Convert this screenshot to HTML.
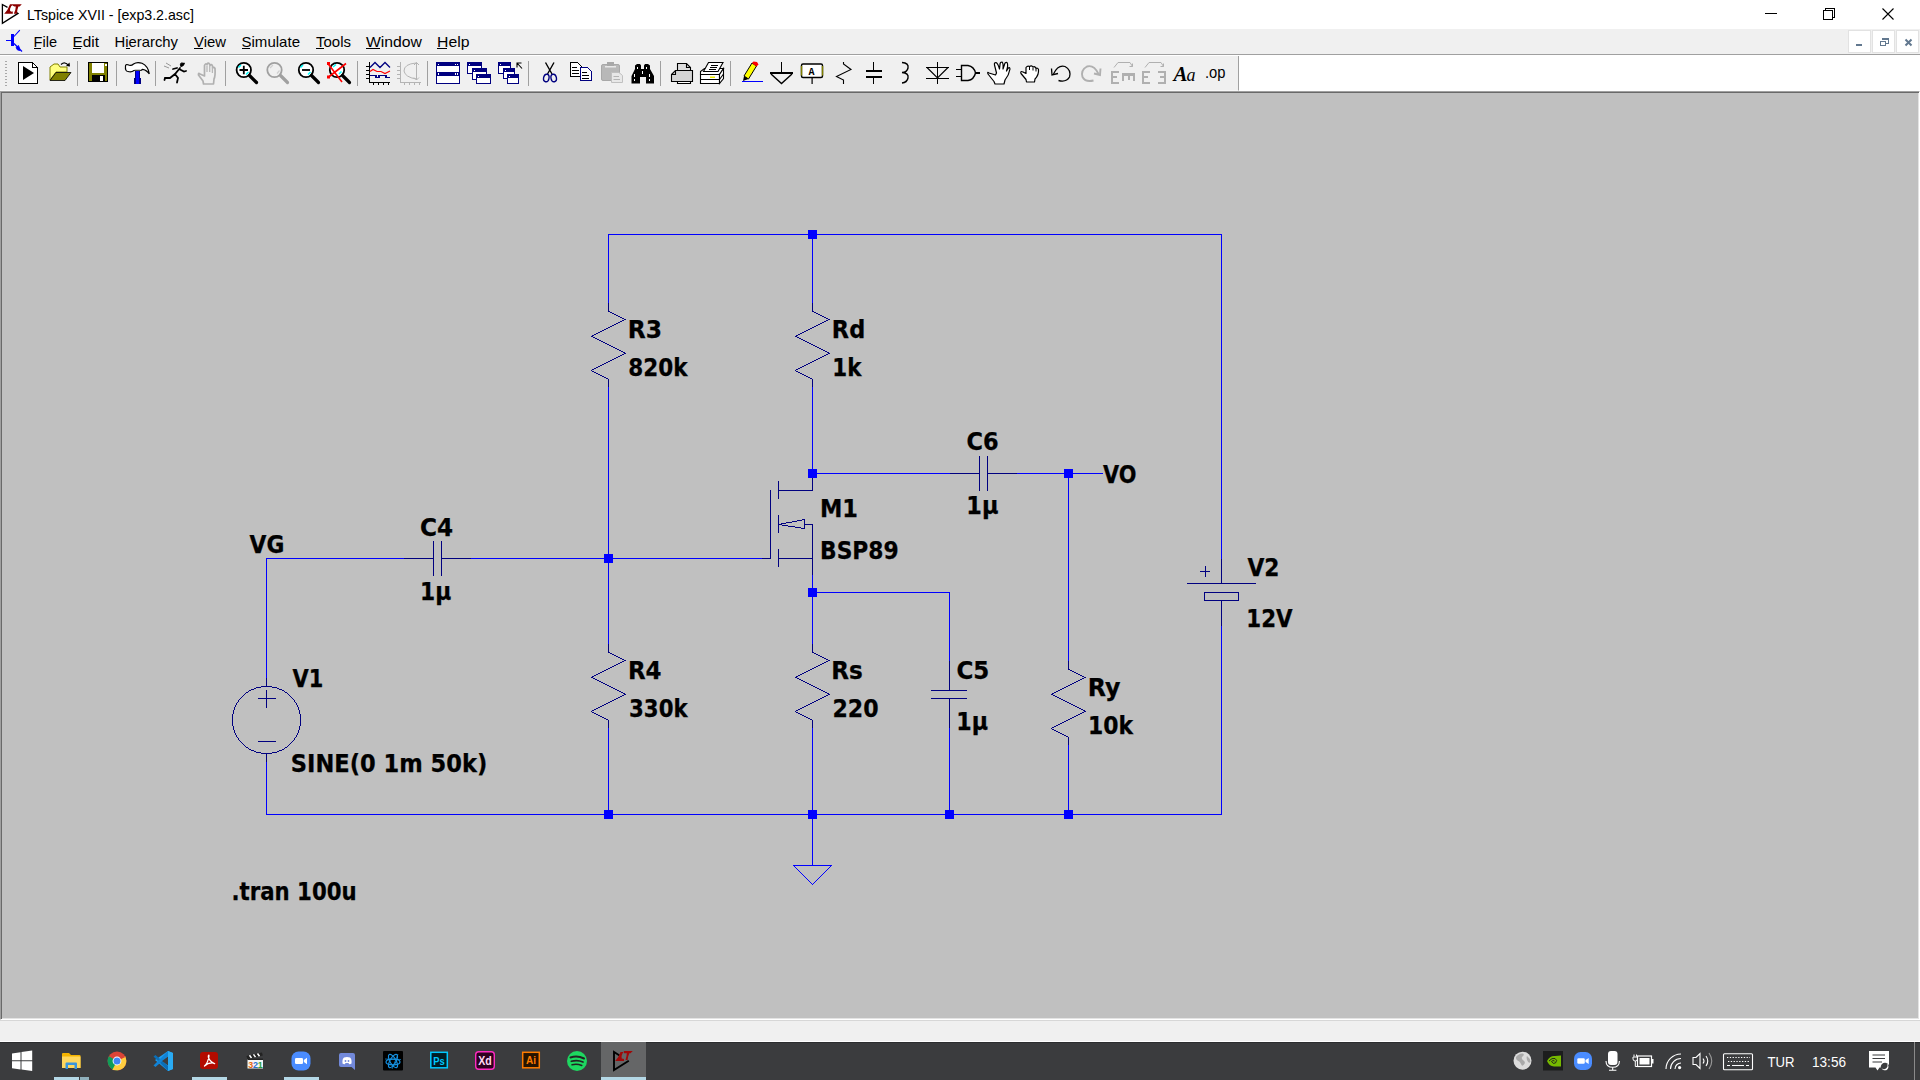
<!DOCTYPE html>
<html><head><meta charset="utf-8"><title>LTspice XVII - [exp3.2.asc]</title>
<style>
html,body{margin:0;padding:0;width:1920px;height:1080px;overflow:hidden;background:#c0c0c0;font-family:"Liberation Sans",sans-serif;}
#title{position:absolute;left:0;top:0;width:1920px;height:29px;background:#fff;}
#menu{position:absolute;left:0;top:29px;width:1920px;height:25px;background:#f0f0f0;border-bottom:1px solid #a0a0a0;}
#tb{position:absolute;left:0;top:55px;width:1920px;height:36px;background:#fff;}
#tbl{position:absolute;left:0;top:1px;width:1238px;height:34px;background:#f0f0f0;border-right:1px solid #a0a0a0;border-bottom:1px solid #f8f8f8}
#cv{position:absolute;left:0;top:91px;width:1918px;height:927px;background:#c0c0c0;border-top:1px solid #a0a0a0;border-left:1px solid #a0a0a0;border-right:1px solid #fff;border-bottom:1px solid #fff;box-shadow:inset 1px 1px 0 #696969, inset -1px -1px 0 #e3e3e3;box-sizing:content-box}
#status{position:absolute;left:0;top:1020px;width:1920px;height:22px;background:#f0f0f0;border-top:1px solid #d7d7d7;border-bottom:1px solid #fff;box-sizing:border-box}
#task{position:absolute;left:0;top:1042px;width:1920px;height:38px;background:#3b3c3e;border-top:1px solid #2c2d2f;box-sizing:border-box}
#sch{position:absolute;left:0;top:0;}
</style></head><body>
<div id="cv"></div>
<svg id="sch" width="1920" height="1080" viewBox="0 0 1920 1080" shape-rendering="crispEdges"><path fill="#0000ff" d="M266 814h956v1h-956zM266 559h1v119h-1zM266 762h1v52h-1zM604 554h9v4h-9zM604 559h9v4h-9zM604 810h9v4h-9zM604 815h9v4h-9zM1068 478h1v183h-1zM1068 745h1v65h-1zM608 235h1v68h-1zM608 387h1v167h-1zM608 563h1v81h-1zM608 728h1v82h-1zM812 239h1v64h-1zM812 387h1v82h-1zM812 575h1v13h-1zM812 597h1v47h-1zM812 728h1v82h-1zM812 819h1v46h-1zM812 884h1v1h-1zM949 593h1v68h-1zM949 728h1v82h-1zM1221 235h1v324h-1zM1221 626h1v188h-1zM808 230h9v4h-9zM808 235h9v4h-9zM808 469h9v4h-9zM808 474h9v4h-9zM808 588h9v4h-9zM808 593h9v4h-9zM808 810h9v4h-9zM808 815h9v4h-9zM945 810h9v4h-9zM945 815h9v4h-9zM1064 469h9v4h-9zM1064 474h9v4h-9zM1064 810h9v4h-9zM1064 815h9v4h-9zM808 473h142v1h-142zM808 592h142v1h-142zM1017 473h86v1h-86zM608 234h614v1h-614zM266 558h138v1h-138zM471 558h291v1h-291zM793 865h39v1h-39zM795 867h1v1h-1zM829 867h1v1h-1zM794 866h1v1h-1zM830 866h1v1h-1zM802 874h1v1h-1zM822 874h1v1h-1zM806 878h1v1h-1zM818 878h1v1h-1zM798 870h1v1h-1zM826 870h1v1h-1zM800 872h1v1h-1zM824 872h1v1h-1zM810 882h1v1h-1zM814 882h1v1h-1zM803 875h1v1h-1zM821 875h1v1h-1zM796 868h1v1h-1zM828 868h1v1h-1zM809 881h1v1h-1zM815 881h1v1h-1zM801 873h1v1h-1zM823 873h1v1h-1zM797 869h1v1h-1zM827 869h1v1h-1zM799 871h1v1h-1zM825 871h1v1h-1zM805 877h1v1h-1zM819 877h1v1h-1zM807 879h1v1h-1zM817 879h1v1h-1zM808 880h1v1h-1zM816 880h1v1h-1zM811 883h1v1h-1zM813 883h1v1h-1zM804 876h1v1h-1zM820 876h1v1h-1z"/>
<path fill="#000080" d="M770 490h1v68h-1zM778 524h4v1h-4zM804 524h9v1h-9zM598 332h2v1h-2zM598 366h2v1h-2zM598 374h2v1h-2zM598 673h2v1h-2zM598 707h2v1h-2zM598 715h2v1h-2zM802 332h2v1h-2zM802 366h2v1h-2zM802 374h2v1h-2zM802 673h2v1h-2zM802 707h2v1h-2zM802 715h2v1h-2zM249 690h2v1h-2zM249 749h2v1h-2zM266 678h1v8h-1zM266 690h1v8h-1zM266 699h1v9h-1zM266 754h1v8h-1zM282 690h2v1h-2zM282 749h2v1h-2zM617 349h2v1h-2zM617 690h2v1h-2zM821 349h2v1h-2zM821 690h2v1h-2zM931 690h36v1h-36zM931 698h36v1h-36zM1058 690h2v1h-2zM1058 724h2v1h-2zM1058 732h2v1h-2zM233 710h1v4h-1zM233 726h1v4h-1zM299 710h1v4h-1zM299 726h1v4h-1zM592 335h2v1h-2zM592 369h2v1h-2zM592 371h2v1h-2zM592 676h2v1h-2zM592 710h2v1h-2zM592 712h2v1h-2zM796 335h2v1h-2zM796 369h2v1h-2zM796 371h2v1h-2zM796 676h2v1h-2zM796 710h2v1h-2zM796 712h2v1h-2zM949 661h1v29h-1zM949 699h1v29h-1zM1083 710h2v1h-2zM404 558h30v1h-30zM441 558h30v1h-30zM762 558h9v1h-9zM778 490h35v1h-35zM778 558h35v1h-35zM238 700h1v2h-1zM238 738h1v2h-1zM294 700h1v2h-1zM294 738h1v2h-1zM612 313h2v1h-2zM612 325h2v1h-2zM612 359h2v1h-2zM612 654h2v1h-2zM612 666h2v1h-2zM612 700h2v1h-2zM816 313h2v1h-2zM816 325h2v1h-2zM816 359h2v1h-2zM816 654h2v1h-2zM816 666h2v1h-2zM816 700h2v1h-2zM1063 700h2v1h-2zM618 316h2v1h-2zM618 322h2v1h-2zM618 356h2v1h-2zM618 657h2v1h-2zM618 663h2v1h-2zM618 697h2v1h-2zM822 316h2v1h-2zM822 322h2v1h-2zM822 356h2v1h-2zM822 657h2v1h-2zM822 663h2v1h-2zM822 697h2v1h-2zM1068 661h1v8h-1zM1068 737h1v8h-1zM433 541h1v17h-1zM433 559h1v17h-1zM441 541h1v17h-1zM441 559h1v17h-1zM778 481h1v9h-1zM778 491h1v8h-1zM778 515h1v9h-1zM778 525h1v8h-1zM778 549h1v9h-1zM778 559h1v8h-1zM812 303h1v8h-1zM812 379h1v8h-1zM812 478h1v12h-1zM812 525h1v33h-1zM812 559h1v16h-1zM812 644h1v8h-1zM812 720h1v8h-1zM1187 583h69v1h-69zM1221 559h1v24h-1zM1221 601h1v25h-1zM594 334h2v1h-2zM594 368h2v1h-2zM594 372h2v1h-2zM594 675h2v1h-2zM594 709h2v1h-2zM594 713h2v1h-2zM798 334h2v1h-2zM798 368h2v1h-2zM798 372h2v1h-2zM798 675h2v1h-2zM798 709h2v1h-2zM798 713h2v1h-2zM603 342h2v1h-2zM603 683h2v1h-2zM807 342h2v1h-2zM807 683h2v1h-2zM1072 671h2v1h-2zM1072 683h2v1h-2zM1072 717h2v1h-2zM239 699h1v1h-1zM239 740h1v1h-1zM293 699h1v1h-1zM293 740h1v1h-1zM614 314h2v1h-2zM614 324h2v1h-2zM614 358h2v1h-2zM614 655h2v1h-2zM614 665h2v1h-2zM614 699h2v1h-2zM818 314h2v1h-2zM818 324h2v1h-2zM818 358h2v1h-2zM818 655h2v1h-2zM818 665h2v1h-2zM818 699h2v1h-2zM1061 699h2v1h-2zM240 698h1v1h-1zM240 741h1v1h-1zM258 698h18v1h-18zM258 741h18v1h-18zM292 698h1v1h-1zM292 741h1v1h-1zM616 315h2v1h-2zM616 323h2v1h-2zM616 357h2v1h-2zM616 656h2v1h-2zM616 664h2v1h-2zM616 698h2v1h-2zM820 315h2v1h-2zM820 323h2v1h-2zM820 357h2v1h-2zM820 656h2v1h-2zM820 664h2v1h-2zM820 698h2v1h-2zM1059 698h2v1h-2zM608 303h1v8h-1zM608 379h1v8h-1zM608 644h1v8h-1zM608 720h1v8h-1zM610 312h2v1h-2zM610 326h2v1h-2zM610 360h2v1h-2zM610 653h2v1h-2zM610 667h2v1h-2zM610 701h2v1h-2zM814 312h2v1h-2zM814 326h2v1h-2zM814 360h2v1h-2zM814 653h2v1h-2zM814 667h2v1h-2zM814 701h2v1h-2zM1065 701h2v1h-2zM1082 676h2v1h-2zM1082 678h2v1h-2zM1082 712h2v1h-2zM1204 592h35v1h-35zM1204 600h35v1h-35zM245 693h1v1h-1zM245 746h1v1h-1zM287 693h1v1h-1zM287 746h1v1h-1zM623 352h2v1h-2zM623 693h2v1h-2zM827 352h2v1h-2zM827 693h2v1h-2zM1052 693h2v1h-2zM1052 727h2v1h-2zM1052 729h2v1h-2zM232 714h1v12h-1zM300 714h1v12h-1zM1062 688h2v1h-2zM1062 722h2v1h-2zM1062 734h2v1h-2zM236 703h1v2h-1zM236 735h1v2h-1zM296 703h1v2h-1zM296 735h1v2h-1zM606 328h2v1h-2zM606 362h2v1h-2zM606 378h2v1h-2zM606 669h2v1h-2zM606 703h2v1h-2zM606 719h2v1h-2zM810 328h2v1h-2zM810 362h2v1h-2zM810 378h2v1h-2zM810 669h2v1h-2zM810 703h2v1h-2zM810 719h2v1h-2zM1069 703h2v1h-2zM242 696h1v1h-1zM242 743h1v1h-1zM290 696h1v1h-1zM290 743h1v1h-1zM620 317h2v1h-2zM620 321h2v1h-2zM620 355h2v1h-2zM620 658h2v1h-2zM620 662h2v1h-2zM620 696h2v1h-2zM824 317h2v1h-2zM824 321h2v1h-2zM824 355h2v1h-2zM824 658h2v1h-2zM824 662h2v1h-2zM824 696h2v1h-2zM1055 696h2v1h-2zM1200 571h10v1h-10zM615 348h2v1h-2zM615 689h2v1h-2zM819 348h2v1h-2zM819 689h2v1h-2zM246 692h2v1h-2zM246 747h2v1h-2zM285 692h2v1h-2zM285 747h2v1h-2zM621 351h2v1h-2zM621 692h2v1h-2zM825 351h2v1h-2zM825 692h2v1h-2zM1054 692h2v1h-2zM1054 726h2v1h-2zM1054 730h2v1h-2zM607 344h2v1h-2zM607 685h2v1h-2zM811 344h2v1h-2zM811 685h2v1h-2zM254 688h2v1h-2zM254 751h2v1h-2zM277 688h2v1h-2zM277 751h2v1h-2zM613 347h2v1h-2zM613 688h2v1h-2zM817 347h2v1h-2zM817 688h2v1h-2zM608 311h2v1h-2zM608 327h2v1h-2zM608 361h2v1h-2zM608 652h2v1h-2zM608 668h2v1h-2zM608 702h2v1h-2zM812 311h2v1h-2zM812 327h2v1h-2zM812 361h2v1h-2zM812 652h2v1h-2zM812 668h2v1h-2zM812 702h2v1h-2zM1080 675h2v1h-2zM1080 679h2v1h-2zM1080 713h2v1h-2zM609 345h2v1h-2zM609 686h2v1h-2zM813 345h2v1h-2zM813 686h2v1h-2zM601 341h2v1h-2zM601 682h2v1h-2zM805 341h2v1h-2zM805 682h2v1h-2zM237 702h1v1h-1zM237 737h1v1h-1zM295 702h1v1h-1zM295 737h1v1h-1zM1067 702h2v1h-2zM243 695h1v1h-1zM243 744h1v1h-1zM289 695h1v1h-1zM289 744h1v1h-1zM622 318h2v1h-2zM622 320h2v1h-2zM622 354h2v1h-2zM622 659h2v1h-2zM622 661h2v1h-2zM622 695h2v1h-2zM826 318h2v1h-2zM826 320h2v1h-2zM826 354h2v1h-2zM826 659h2v1h-2zM826 661h2v1h-2zM826 695h2v1h-2zM1053 695h2v1h-2zM597 339h2v1h-2zM597 680h2v1h-2zM801 339h2v1h-2zM801 680h2v1h-2zM1078 674h2v1h-2zM1078 680h2v1h-2zM1078 714h2v1h-2zM795 527h6v1h-6zM804 520h1v4h-1zM804 525h1v3h-1zM261 686h11v1h-11zM261 753h11v1h-11zM1066 686h2v1h-2zM1066 720h2v1h-2zM1066 736h2v1h-2zM599 340h2v1h-2zM599 681h2v1h-2zM803 340h2v1h-2zM803 681h2v1h-2zM1076 673h2v1h-2zM1076 681h2v1h-2zM1076 715h2v1h-2zM1205 566h1v5h-1zM1205 572h1v5h-1zM1068 669h2v1h-2zM1068 685h2v1h-2zM1068 719h2v1h-2zM591 336h2v1h-2zM591 677h2v1h-2zM795 336h2v1h-2zM795 677h2v1h-2zM1084 677h2v1h-2zM1084 711h2v1h-2zM801 528h4v1h-4zM595 338h2v1h-2zM595 679h2v1h-2zM799 338h2v1h-2zM799 679h2v1h-2zM251 689h3v1h-3zM251 750h3v1h-3zM279 689h3v1h-3zM279 750h3v1h-3zM1060 689h2v1h-2zM1060 723h2v1h-2zM1060 733h2v1h-2zM979 456h1v17h-1zM979 474h1v17h-1zM987 456h1v17h-1zM987 474h1v17h-1zM604 329h2v1h-2zM604 363h2v1h-2zM604 377h2v1h-2zM604 670h2v1h-2zM604 704h2v1h-2zM604 718h2v1h-2zM808 329h2v1h-2zM808 363h2v1h-2zM808 377h2v1h-2zM808 670h2v1h-2zM808 704h2v1h-2zM808 718h2v1h-2zM1064 687h2v1h-2zM1064 721h2v1h-2zM1064 735h2v1h-2zM782 525h6v1h-6zM235 705h1v2h-1zM235 733h1v2h-1zM297 705h1v2h-1zM297 733h1v2h-1zM602 330h2v1h-2zM602 364h2v1h-2zM602 376h2v1h-2zM602 671h2v1h-2zM602 705h2v1h-2zM602 717h2v1h-2zM806 330h2v1h-2zM806 364h2v1h-2zM806 376h2v1h-2zM806 671h2v1h-2zM806 705h2v1h-2zM806 717h2v1h-2zM1073 705h2v1h-2zM600 331h2v1h-2zM600 365h2v1h-2zM600 375h2v1h-2zM600 672h2v1h-2zM600 706h2v1h-2zM600 716h2v1h-2zM804 331h2v1h-2zM804 365h2v1h-2zM804 375h2v1h-2zM804 672h2v1h-2zM804 706h2v1h-2zM804 716h2v1h-2zM792 521h5v1h-5zM234 707h1v3h-1zM234 730h1v3h-1zM298 707h1v3h-1zM298 730h1v3h-1zM1056 691h2v1h-2zM1056 725h2v1h-2zM1056 731h2v1h-2zM596 333h2v1h-2zM596 367h2v1h-2zM596 373h2v1h-2zM596 674h2v1h-2zM596 708h2v1h-2zM596 714h2v1h-2zM800 333h2v1h-2zM800 367h2v1h-2zM800 373h2v1h-2zM800 674h2v1h-2zM800 708h2v1h-2zM800 714h2v1h-2zM624 319h2v1h-2zM624 353h2v1h-2zM624 660h2v1h-2zM624 694h2v1h-2zM828 319h2v1h-2zM828 353h2v1h-2zM828 660h2v1h-2zM828 694h2v1h-2zM1074 672h2v1h-2zM1074 682h2v1h-2zM1074 716h2v1h-2zM1077 707h2v1h-2zM1071 704h2v1h-2zM1204 593h1v7h-1zM1238 593h1v7h-1zM248 691h1v1h-1zM248 748h1v1h-1zM284 691h1v1h-1zM284 748h1v1h-1zM1070 670h2v1h-2zM1070 684h2v1h-2zM1070 718h2v1h-2zM619 350h2v1h-2zM619 691h2v1h-2zM823 350h2v1h-2zM823 691h2v1h-2zM256 687h5v1h-5zM256 752h5v1h-5zM272 687h5v1h-5zM272 752h5v1h-5zM611 346h2v1h-2zM611 687h2v1h-2zM815 346h2v1h-2zM815 687h2v1h-2zM950 473h30v1h-30zM987 473h30v1h-30zM605 343h2v1h-2zM605 684h2v1h-2zM809 343h2v1h-2zM809 684h2v1h-2zM1081 709h2v1h-2zM593 337h2v1h-2zM593 678h2v1h-2zM797 337h2v1h-2zM797 678h2v1h-2zM797 520h5v1h-5zM241 697h1v1h-1zM241 742h1v1h-1zM291 697h1v1h-1zM291 742h1v1h-1zM1057 697h2v1h-2zM788 526h7v1h-7zM591 370h1v1h-1zM591 711h1v1h-1zM795 370h1v1h-1zM795 711h1v1h-1zM1075 706h2v1h-2zM244 694h1v1h-1zM244 745h1v1h-1zM288 694h1v1h-1zM288 745h1v1h-1zM1051 694h2v1h-2zM781 523h5v1h-5zM802 519h3v1h-3zM786 522h6v1h-6zM1079 708h2v1h-2zM1051 728h1v1h-1z"/><g font-family="'DejaVu Sans Condensed','Liberation Sans',sans-serif" font-weight="bold" fill="#000" stroke="#000" stroke-width="0.25" shape-rendering="auto"><text x="627.88" y="337.6" textLength="34.26" lengthAdjust="spacingAndGlyphs" font-size="24.5">R3</text><text x="628.30" y="375.5" textLength="59.30" lengthAdjust="spacingAndGlyphs" font-size="24.5">820k</text><text x="831.86" y="337.5" textLength="33.35" lengthAdjust="spacingAndGlyphs" font-size="24.5">Rd</text><text x="832.36" y="375.5" textLength="29.14" lengthAdjust="spacingAndGlyphs" font-size="24.5">1k</text><text x="966.48" y="449.5" textLength="32.06" lengthAdjust="spacingAndGlyphs" font-size="24.5">C6</text><text x="966.37" y="514.2" textLength="32.06" lengthAdjust="spacingAndGlyphs" font-size="24.5">1µ</text><text x="1103.00" y="482.5" textLength="33.39" lengthAdjust="spacingAndGlyphs" font-size="24.5">VO</text><text x="819.96" y="516.8" textLength="38.00" lengthAdjust="spacingAndGlyphs" font-size="24.5">M1</text><text x="820.02" y="558.7" textLength="78.66" lengthAdjust="spacingAndGlyphs" font-size="24.5">BSP89</text><text x="419.95" y="535.5" textLength="33.10" lengthAdjust="spacingAndGlyphs" font-size="24.5">C4</text><text x="420.02" y="599.5" textLength="31.20" lengthAdjust="spacingAndGlyphs" font-size="24.5">1µ</text><text x="249.50" y="552.5" textLength="34.78" lengthAdjust="spacingAndGlyphs" font-size="24.5">VG</text><text x="1247.50" y="575.8" textLength="32.02" lengthAdjust="spacingAndGlyphs" font-size="24.5">V2</text><text x="1246.36" y="626.7" textLength="46.28" lengthAdjust="spacingAndGlyphs" font-size="24.5">12V</text><text x="292.50" y="687" textLength="30.77" lengthAdjust="spacingAndGlyphs" font-size="24.5">V1</text><text x="290.78" y="771.6" textLength="196.52" lengthAdjust="spacingAndGlyphs" font-size="24.5">SINE(0 1m 50k)</text><text x="627.92" y="679" textLength="33.63" lengthAdjust="spacingAndGlyphs" font-size="24.5">R4</text><text x="629.03" y="716.8" textLength="58.57" lengthAdjust="spacingAndGlyphs" font-size="24.5">330k</text><text x="831.31" y="678.8" textLength="31.52" lengthAdjust="spacingAndGlyphs" font-size="24.5">Rs</text><text x="832.40" y="716.8" textLength="46.14" lengthAdjust="spacingAndGlyphs" font-size="24.5">220</text><text x="956.46" y="678.8" textLength="32.86" lengthAdjust="spacingAndGlyphs" font-size="24.5">C5</text><text x="956.39" y="730" textLength="31.76" lengthAdjust="spacingAndGlyphs" font-size="24.5">1µ</text><text x="1087.85" y="695.8" textLength="32.55" lengthAdjust="spacingAndGlyphs" font-size="24.5">Ry</text><text x="1088.01" y="733.8" textLength="45.05" lengthAdjust="spacingAndGlyphs" font-size="24.5">10k</text><text x="231.47" y="900" textLength="125.17" lengthAdjust="spacingAndGlyphs" font-size="24.5">.tran 100u</text></g></svg>
<div id="title"><svg width="1920" height="29" viewBox="0 0 1920 29" style="position:absolute;left:0;top:0">
<polyline points="7.500,7.400 2.400,4.500 2.400,23.200 18,13.400 16.500,12.500" fill="none" stroke="#000" stroke-width="1.3"/>
<path d="M10,4.200 L13,4.200 Q9.500,8 10.500,11 L12.800,11 L12.800,13.800 L4.200,13.800 Q8,10 10,4.200 Z M12.200,4.200 L21.800,4.200 L19.600,6.600 L18.400,6.600 Q17,10 17,13.800 L13.800,13.800 Q15.800,10 15.800,6.600 L12.800,6.600 Z" fill="#8b0000"/>
<ellipse cx="12.300" cy="8.800" rx="1.900" ry="3" fill="#fff" transform="rotate(20 12.300 8.800)"/>
<text x="27" y="20" font-size="15" textLength="167" lengthAdjust="spacingAndGlyphs" fill="#000">LTspice XVII - [exp3.2.asc]</text>
<g stroke="#000" stroke-width="1" fill="none" shape-rendering="crispEdges">
<line x1="1765" y1="13.500" x2="1777" y2="13.500"/>
<rect x="1823.500" y="10.500" width="9" height="9"/>
<polyline points="1825.500,10.500 1825.500,8.500 1834.500,8.500 1834.500,17.500 1832.500,17.500"/>
</g>
<path d="M1882.500,8.500 L1893.500,19.500 M1893.500,8.500 L1882.500,19.500" stroke="#000" stroke-width="1.1" fill="none"/>
</svg>
</div>
<div id="menu"><svg width="1920" height="25" viewBox="0 29 1920 25" style="position:absolute;left:0;top:0">
<g stroke="#0000ff" fill="none">
<rect x="11" y="34" width="3" height="12" fill="#0000ff" stroke="none" shape-rendering="crispEdges"/>
<rect x="6" y="40" width="5" height="1" fill="#0000ff" stroke="none" shape-rendering="crispEdges"/>
<path d="M14,36.500 L19.800,30.200" stroke-width="1.1"/>
<path d="M14,43.500 L22,51.500" stroke-width="1.2"/>
<path d="M16,47.500 L18.500,45.500 L19.500,48 L20,50.500 L17.500,50 Z" fill="#0000ff" stroke-width="0.8"/>
</g>
<g font-size="15" fill="#000">
<text x="33.500" y="46.800" textLength="23.500" lengthAdjust="spacingAndGlyphs">File</text>
<text x="72.500" y="46.800" textLength="26.500" lengthAdjust="spacingAndGlyphs">Edit</text>
<text x="114.500" y="46.800" textLength="63.500" lengthAdjust="spacingAndGlyphs">Hierarchy</text>
<text x="194" y="46.800" textLength="32" lengthAdjust="spacingAndGlyphs">View</text>
<text x="241.500" y="46.800" textLength="58.500" lengthAdjust="spacingAndGlyphs">Simulate</text>
<text x="316" y="46.800" textLength="35" lengthAdjust="spacingAndGlyphs">Tools</text>
<text x="366" y="46.800" textLength="56" lengthAdjust="spacingAndGlyphs">Window</text>
<text x="437" y="46.800" textLength="32.500" lengthAdjust="spacingAndGlyphs">Help</text>
</g>
<g fill="#000" shape-rendering="crispEdges">
<rect x="34" y="48" width="7" height="1"/><rect x="73" y="48" width="8" height="1"/><rect x="126" y="48" width="4" height="1"/>
<rect x="194" y="48" width="9" height="1"/><rect x="242" y="48" width="8" height="1"/><rect x="316" y="48" width="8" height="1"/>
<rect x="366" y="48" width="14" height="1"/><rect x="437" y="48" width="10" height="1"/>
</g>
<g fill="#fff" stroke="#e2e2e2" stroke-width="1" shape-rendering="crispEdges">
<rect x="1848.500" y="30.500" width="22" height="22"/><rect x="1872.500" y="30.500" width="22" height="22"/><rect x="1896.500" y="30.500" width="22" height="22"/>
</g>
<rect x="1856" y="44" width="6" height="2" fill="#62788f"/>
<g fill="none" stroke="#62788f" shape-rendering="crispEdges">
<rect x="1880.500" y="41.500" width="5" height="4"/><line x1="1880" y1="41" x2="1886" y2="41"/>
<polyline points="1882.500,40 1882.500,38.500 1888.500,38.500 1888.500,43.500 1886,43.500"/><line x1="1882" y1="39" x2="1889" y2="39"/>
</g>
<path d="M1905.500,39.500 L1911.500,45.500 M1911.500,39.500 L1905.500,45.500" stroke="#62788f" stroke-width="2" fill="none"/>
</svg>
</div>
<div id="tb"><div id="tbl"></div><svg width="1920" height="37" viewBox="0 55 1920 37" style="position:absolute;left:0;top:0">
<!-- grip -->
<g fill="#a8a8a8" shape-rendering="crispEdges">
<rect x="5" y="61" width="2" height="1"/><rect x="5" y="64" width="2" height="1"/><rect x="5" y="67" width="2" height="1"/><rect x="5" y="70" width="2" height="1"/><rect x="5" y="73" width="2" height="1"/><rect x="5" y="76" width="2" height="1"/><rect x="5" y="79" width="2" height="1"/><rect x="5" y="82" width="2" height="1"/><rect x="5" y="85" width="2" height="1"/>
</g>
<!-- separators -->
<g fill="#a0a0a0" shape-rendering="crispEdges">
<rect x="77" y="61" width="1" height="25"/><rect x="116" y="61" width="1" height="25"/><rect x="155" y="61" width="1" height="25"/><rect x="225" y="61" width="1" height="25"/>
<rect x="357" y="61" width="1" height="25"/><rect x="427" y="61" width="1" height="25"/><rect x="528" y="61" width="1" height="25"/><rect x="660" y="61" width="1" height="25"/><rect x="730" y="61" width="1" height="25"/>
</g>
<!-- 1 run -->
<g shape-rendering="crispEdges">
<polygon points="18.500,62.500 32.500,62.500 37.500,67.500 37.500,83.500 18.500,83.500" fill="#fff" stroke="#000"/>
<polyline points="32.500,62.500 32.500,67.500 37.500,67.500" fill="none" stroke="#000"/>
</g>
<polygon points="23,66 23,80 34,73" fill="#000"/>
<!-- 2 open -->
<g stroke-linejoin="round">
<polygon points="50,80 50,67 54,64 58,64 60,67 67,67 67,72 56,72" fill="#ffff80" stroke="#808000" stroke-width="1"/>
<polygon points="50,80.500 56,72.500 71,72.500 65,80.500" fill="#808000" stroke="#000" stroke-width="0.8"/>
<path d="M61,64.500 Q65,61 68.500,65.500" fill="none" stroke="#000" stroke-width="1.2"/>
<polygon points="66,66 70,66.500 69.500,62.500" fill="#000"/>
</g>
<!-- 3 save -->
<g shape-rendering="crispEdges">
<rect x="88.500" y="62.500" width="19" height="19" fill="#808000" stroke="#000"/>
<rect x="92" y="63" width="12" height="10" fill="#fff"/>
<rect x="92" y="75" width="13" height="6" fill="#000"/>
<rect x="100" y="76" width="3" height="5" fill="#fff"/>
<rect x="105" y="64" width="2" height="2" fill="#fff"/>
</g>
<!-- 4 hammer -->
<path d="M125.500,66 Q125.500,64 128,64.800 Q131,66.500 133.500,64 Q137,61.500 142,63.300 Q148,66 149.300,73.800 Q146,69.500 142.500,69.300 L141,70.500 L134,70.500 Q131.500,72.500 128,71.500 Q125,71.500 125.500,66 Z" fill="#fff" stroke="#000" stroke-width="1.200"/>
<path d="M134.500,70 L140.500,70" stroke="#909090" stroke-width="1"/>
<g shape-rendering="crispEdges"><rect x="135" y="71" width="5" height="8" fill="#000080"/><rect x="136" y="71" width="3" height="8" fill="#0000ff"/>
<rect x="134" y="78" width="7" height="6" fill="#000080"/><rect x="136" y="78" width="3" height="6" fill="#0000ff"/></g>
<!-- 5 runner -->
<g stroke="#000" fill="none" stroke-width="1.8" stroke-linecap="round">
<path d="M184,63.500 L181,66 M180,68 L175,74 L170,78 L165,78 L164.500,80 M175,74 L178,78 L177,82.500 M173,69 L177,68 M180,69.500 L184,71.500 L186,71"/>
<circle cx="182" cy="64.500" r="1.600" fill="#000" stroke-width="1"/>
</g>
<path d="M164,66 L169,68 M166,63 L171,66" stroke="#808080" stroke-width="0.8"/>
<!-- 6 hand disabled -->
<path d="M200,74 Q198,72.500 198.500,75 L203,81 L203.500,84 L213.500,84 L214,79 Q215.500,76 215,68.500 Q214,66.500 212.700,68 L212.500,66 Q211.500,63.500 210,65.500 L209.500,64 Q208,62 207,64.500 Q205.500,63 204.500,65.500 L204.500,76 Z" fill="none" stroke="#b0b0b0" stroke-width="1.700" stroke-linejoin="round"/>
<path d="M207,65.500 L207,72 M209.700,65.500 L209.700,72 M212.400,67.500 L212.400,73" stroke="#b8b8b8" stroke-width="1.300"/>
<!-- zoom icons -->
<g id="zin">
<circle cx="243.800" cy="70" r="7.200" fill="#fff" stroke="#000" stroke-width="1.800"/>
<path d="M238.500,67.500 L241,65 M246,74.500 L248.500,72" stroke="#00ffff" stroke-width="1.500"/>
<path d="M249.500,75.500 L256.500,82.500" stroke="#000" stroke-width="3.200" stroke-linecap="round"/>
<path d="M239.500,70 L248,70 M243.800,65.800 L243.800,74.200" stroke="#000" stroke-width="1.800"/>
</g>
<g>
<circle cx="274.500" cy="70" r="7.200" fill="#f0f0f0" stroke="#a0a0a0" stroke-width="1.800"/>
<path d="M280.500,75.500 L287.500,82.500" stroke="#a0a0a0" stroke-width="3.200" stroke-linecap="round"/>
<path d="M270,68 L273,65 M277,73.500 L279.500,70.500" stroke="#d0d0d0" stroke-width="1.200"/>
</g>
<g>
<circle cx="306" cy="70" r="7.200" fill="#fff" stroke="#000" stroke-width="1.800"/>
<path d="M300.500,67.500 L303,65 M308,74.500 L310.500,72" stroke="#00ffff" stroke-width="1.500"/>
<path d="M311.500,75.500 L318.500,82.500" stroke="#000" stroke-width="3.200" stroke-linecap="round"/>
<path d="M302,70 L310,70" stroke="#000" stroke-width="1.800"/>
</g>
<g>
<circle cx="337" cy="70" r="7.200" fill="#fff" stroke="#000" stroke-width="1.800"/>
<path d="M333,67 L336,64.500 M339,74 L341.500,71.500" stroke="#00ffff" stroke-width="1.500"/>
<path d="M342.500,75.500 L349.500,82.500" stroke="#000" stroke-width="3.200" stroke-linecap="round"/>
<path d="M327.500,63 L342,82 M346,63.500 L328,77.500" stroke="#ff0000" stroke-width="1.600"/>
<rect x="327" y="62" width="3" height="3" fill="#ff0000"/><rect x="327" y="75.500" width="3" height="3" fill="#ff0000"/>
</g>
<!-- waveform icon -->
<g shape-rendering="crispEdges" fill="none">
<path d="M369.500,62 L369.500,82.500 L390,82.500" stroke="#000"/>
<path d="M366,66.500 L369,66.500 M366,70.500 L369,70.500 M366,74.500 L369,74.500 M366,78.500 L369,78.500 M373.500,83 L373.500,85 M378.500,83 L378.500,85 M383.500,83 L383.500,85 M388.500,83 L388.500,85" stroke="#000"/>
</g>
<polyline points="370,67.500 375,62.500 380,67.500 385,62.500 390,67.500" fill="none" stroke="#000080" stroke-width="1.300"/>
<polyline points="370,71.500 373,69.500 377,71.500 381,71.500 385,73.500 390,71" fill="none" stroke="#ff0000" stroke-width="1.200"/>
<polyline points="370,75.500 376,75.500 376,77.500 379,77.500 379,75.500 386,75.500 386,77.500 390,77.500" fill="none" stroke="#000080" stroke-width="1.200" shape-rendering="crispEdges"/>
<!-- disabled plot -->
<g fill="none" stroke="#b4b4b4" stroke-width="1">
<path d="M400.500,62 L400.500,82.500 L421,82.500" shape-rendering="crispEdges"/>
<path d="M397,66.500 L400,66.500 M397,70.500 L400,70.500 M397,74.500 L400,74.500 M397,78.500 L400,78.500 M404.500,83 L404.500,85 M409.500,83 L409.500,85 M414.500,83 L414.500,85 M419.500,83 L419.500,85" shape-rendering="crispEdges"/>
<path d="M416,63 Q404,64 404,71 Q405,77 416,79 M416.500,62.500 L416.500,80 M414,65 L416.500,62.500 L419,65 M414,77.500 L416.500,80 L419,77.500"/>
</g>
<!-- tile -->
<g shape-rendering="crispEdges">
<rect x="436.500" y="62.500" width="23" height="21" fill="#fff" stroke="#000080"/>
<rect x="437" y="63" width="22" height="3" fill="#000080"/><rect x="437" y="72" width="22" height="4" fill="#000080"/>
<rect x="438" y="64" width="1" height="1" fill="#fff"/><rect x="455" y="64" width="1" height="1" fill="#fff"/><rect x="457" y="64" width="1" height="1" fill="#fff"/>
<rect x="438" y="73" width="1" height="2" fill="#fff"/><rect x="455" y="73" width="1" height="2" fill="#fff"/><rect x="457" y="73" width="1" height="2" fill="#fff"/>
</g>
<!-- cascade -->
<g shape-rendering="crispEdges">
<rect x="467.500" y="62.500" width="14" height="11" fill="#fff" stroke="#000080"/><rect x="468" y="63" width="13" height="3" fill="#000080"/>
<rect x="472.500" y="68.500" width="14" height="11" fill="#fff" stroke="#000080"/><rect x="473" y="69" width="13" height="3" fill="#000080"/>
<rect x="476.500" y="74.500" width="14" height="9" fill="#fff" stroke="#000080"/><rect x="477" y="75" width="13" height="3" fill="#000080"/>
<rect x="469" y="64" width="1" height="1" fill="#fff"/><rect x="474" y="70" width="1" height="1" fill="#fff"/><rect x="478" y="76" width="1" height="1" fill="#fff"/>
</g>
<g shape-rendering="crispEdges">
<rect x="498.500" y="62.500" width="12" height="11" fill="#fff" stroke="#000080"/><rect x="499" y="63" width="11" height="3" fill="#000080"/>
<rect x="503.500" y="68.500" width="11" height="10" fill="#fff" stroke="#000080"/><rect x="504" y="69" width="10" height="3" fill="#000080"/>
<rect x="507.500" y="74.500" width="11" height="9" fill="#fff" stroke="#000080"/><rect x="508" y="75" width="10" height="3" fill="#000080"/>
<rect x="500" y="64" width="1" height="1" fill="#fff"/><rect x="505" y="70" width="1" height="1" fill="#fff"/><rect x="509" y="76" width="1" height="1" fill="#fff"/>
</g>
<path d="M516.500,63 L521.500,63 M517,62.500 L517,67.500 M517,63 L522,68.500" stroke="#000" stroke-width="1.100" fill="none"/>
<!-- scissors -->
<path d="M545.500,62.500 L552,74 M554,62.500 L547.500,74" stroke="#000" stroke-width="1.400" fill="none"/>
<ellipse cx="546.300" cy="78" rx="2.700" ry="3.800" fill="none" stroke="#000080" stroke-width="1.400" transform="rotate(12 546.300 78)"/>
<ellipse cx="553.700" cy="78" rx="2.700" ry="3.800" fill="none" stroke="#000080" stroke-width="1.400" transform="rotate(-12 553.700 78)"/>
<!-- copy -->
<g shape-rendering="crispEdges">
<polygon points="570.500,62.500 577.500,62.500 581.500,66.500 581.500,76.500 570.500,76.500" fill="#fff" stroke="#000"/>
<path d="M572,67.500 L577,67.500 M572,70.500 L579,70.500 M572,73.500 L579,73.500" stroke="#000"/>
<polygon points="580.500,67.500 587.500,67.500 591.500,71.500 591.500,80.500 580.500,80.500" fill="#fff" stroke="#000080"/>
<path d="M582,72.500 L587,72.500 M582,75.500 L589,75.500 M582,78.500 L589,78.500" stroke="#000"/>
</g>
<!-- paste disabled -->
<rect x="601.500" y="64.500" width="18" height="16" rx="1.500" fill="#b8b8b8" stroke="#a8a8a8"/>
<rect x="607" y="62" width="7" height="4" fill="#a8a8a8"/><rect x="605" y="66" width="11" height="1.500" fill="#e8e8e8"/>
<polygon points="611.500,72.500 619,72.500 622.500,75.500 622.500,82.500 611.500,82.500" fill="#e8e8e8" stroke="#c0c0c0"/>
<path d="M613.500,76.500 L619,76.500 M613.500,79.500 L620,79.500" stroke="#b4b4b4"/>
<!-- binoculars -->
<path d="M631.500,83.500 L631.500,76 L635,69 L635,65.500 L637,64 L640,64 L641,65.500 L641,69 L644,69 L644,65.500 L645,64 L648,64 L650,65.500 L650,69 L654,76 L654,83.500 L646,83.500 L646,77 L640,77 L640,83.500 Z" fill="#000"/>
<g fill="#fff" shape-rendering="crispEdges"><rect x="634" y="74" width="1" height="3"/><rect x="634" y="79" width="1" height="2"/><rect x="649" y="74" width="1" height="3"/><rect x="649" y="79" width="1" height="2"/><rect x="637" y="67" width="1" height="2"/><rect x="646" y="67" width="1" height="2"/><rect x="642" y="71" width="1" height="3"/></g>
<!-- printers -->
<g stroke="#000" stroke-width="1.100" stroke-linejoin="miter">
<polygon points="677.500,70.500 677.500,63.500 686.500,63.500 690.500,67.500 690.500,70.500" fill="#dedede"/>
<polyline points="686.500,63.500 686.500,67.500 690.500,67.500" fill="none"/>
<polygon points="671.500,74.500 675.500,70.500 692.500,70.500 692.500,81.500 671.500,81.500" fill="#d4d4d4"/>
<polyline points="671.500,74.500 675.500,74.500 675.500,70.500" fill="none"/>
<polygon points="677.500,81.500 677.500,83.500 690.500,83.500 690.500,81.500" fill="#fff"/>
</g>
<g stroke="#000" stroke-width="1.100" stroke-linejoin="miter">
<polygon points="700.500,74.500 700.500,71.500 704.500,68.500 723.500,68.500 719.500,74.500" fill="#fff"/>
<polygon points="700.500,74.500 719.500,74.500 719.500,83.500 700.500,83.500" fill="#fff"/>
<polygon points="719.500,74.500 723.500,68.500 723.500,78.500 719.500,83.500" fill="#fff"/>
<path d="M700.500,79.500 L719.500,79.500 L723.500,74" fill="none"/>
<polygon points="703.500,71.500 708.500,62.500 723,62.500 718,71.500" fill="#fff"/>
<path d="M711,65.500 L718,65.500 M710,67.500 L717,67.500 M709,69.500 L716,69.500" fill="none"/>
</g>
<rect x="710" y="76.500" width="5" height="1.500" fill="#f0f000"/>
<!-- pencil -->
<polygon points="744,76 752,63 756.500,66 748.500,79" fill="#ffff00" stroke="#000" stroke-width="1"/>
<polygon points="752,63 753.500,61.500 757,62 758.500,64.500 756.500,66.500" fill="#ff0000"/>
<polygon points="744,76 748.500,79 743,81" fill="#000"/>
<rect x="742" y="81" width="21" height="1" fill="#0000ff" shape-rendering="crispEdges"/>
<!-- ground -->
<g shape-rendering="crispEdges"><rect x="781" y="62" width="1" height="11" fill="#000"/><rect x="770" y="72" width="23" height="2" fill="#000"/></g>
<polyline points="771,74 781.500,83.500 792,74" fill="none" stroke="#000" stroke-width="1.400"/>
<!-- label -->
<rect x="801.500" y="64" width="21" height="13.500" rx="1.500" fill="#fff" stroke="#000" stroke-width="1.400"/>
<path d="M801.500,66 L801.500,75.500 M822.500,66 L822.500,75.500" stroke="#808000" stroke-width="1.400"/>
<text x="808.500" y="75" font-size="10" font-weight="bold" fill="#000" font-family="'Liberation Mono',monospace">A</text>
<rect x="811.500" y="78" width="1.200" height="6" fill="#000"/>
<!-- resistor -->
<polyline points="843.500,62 843.500,64 851,69.500 836.500,76.500 843.500,80 843.500,84" fill="none" stroke="#000" stroke-width="1.100"/>
<!-- cap -->
<g shape-rendering="crispEdges" fill="#000"><rect x="873" y="62" width="1" height="9"/><rect x="866" y="70" width="16" height="2"/><rect x="866" y="76" width="16" height="2"/><rect x="873" y="78" width="1" height="6"/></g>
<!-- inductor -->
<path d="M902,62.500 Q909,63 908,68 Q907,72.500 902,72.500 Q909,73 908,78 Q907,82.500 902,83" fill="none" stroke="#000" stroke-width="1.400"/>
<!-- diode -->
<g shape-rendering="crispEdges" fill="#000"><rect x="937" y="62" width="1" height="22"/><rect x="926" y="67" width="23" height="1"/><rect x="926" y="78" width="23" height="1"/></g>
<path d="M927,67.500 L937.500,78 L948,67.500" fill="none" stroke="#000" stroke-width="1.100"/>
<!-- gate -->
<path d="M961.500,65.500 L968,65.500 Q974,66.500 975.500,73 Q974,79.500 968,80.500 L961.500,80.500 Z" fill="#f0f0f0" stroke="#000" stroke-width="1.400"/>
<path d="M956,69.500 L961,69.500 M956,76.500 L961,76.500" stroke="#000" stroke-width="1"/><path d="M975.500,73 L980,73" stroke="#000" stroke-width="2"/>
<!-- move hand -->
<path d="M989,73 Q987,71.500 988,74 L994,81.500 L995,84 L1004,84 L1005,80 Q1009,75 1010,69 Q1009.500,66.500 1008,68.500 L1006.500,71 Q1008.500,65 1007,62.500 Q1005,62 1004.500,64.500 L1003,69 Q1003.500,63 1002,62 Q1000,62 1000,64.500 L999.500,69 Q998,63.500 996,62.500 Q994,62.500 994.500,65 L996.500,73 L995.500,75 Z" fill="#fff" stroke="#000" stroke-width="1.200" stroke-linejoin="round"/>
<!-- drag hand -->
<path d="M1023,72 Q1020,70.500 1021,73.500 L1026,79.500 L1026.500,82 L1034.500,82 L1035,79 Q1039,75 1038.500,69.500 Q1037.500,67.500 1036,68.500 Q1035,66 1033,67 Q1031.500,65 1029.500,66.500 Q1027.500,65.500 1026,67.500 L1026,73.500 Z" fill="#fff" stroke="#000" stroke-width="1.200" stroke-linejoin="round"/>
<path d="M1029.500,67 L1029.500,70 M1033,67.500 L1033,70.500 M1036,69 L1036,71.500" stroke="#000" stroke-width="1"/>
<!-- undo -->
<path d="M1053.500,74 Q1058,64.500 1065,66.500 Q1071.500,70 1069.500,77 Q1066.500,82.500 1058.500,80.500" fill="none" stroke="#000" stroke-width="1.300"/>
<path d="M1051.500,68.500 L1052,75 L1058,73.500" fill="none" stroke="#000" stroke-width="1.300"/>
<!-- redo disabled -->
<path d="M1098.500,74 Q1094,64.500 1087,66.500 Q1080.500,70 1082.500,77 Q1085.500,82.500 1093.500,80.500" fill="none" stroke="#b0b0b0" stroke-width="1.900"/>
<path d="M1100.500,68.500 L1100,75 L1094,73.500" fill="none" stroke="#b0b0b0" stroke-width="1.900"/>
<!-- rotate / mirror -->
<g fill="#b0b0b0" shape-rendering="crispEdges">
<rect x="1111" y="71" width="2" height="13"/><rect x="1111" y="71" width="8" height="2"/><rect x="1111" y="76" width="6" height="2"/><rect x="1111" y="82" width="8" height="2"/>
<rect x="1122" y="73" width="13" height="3"/><rect x="1122" y="73" width="2" height="8"/><rect x="1128" y="73" width="2" height="7"/><rect x="1133" y="73" width="2" height="8"/>
<rect x="1142" y="71" width="2" height="13"/><rect x="1142" y="71" width="8" height="2"/><rect x="1142" y="76" width="6" height="2"/><rect x="1142" y="82" width="8" height="2"/>
<rect x="1164" y="71" width="2" height="13"/><rect x="1158" y="71" width="8" height="2"/><rect x="1160" y="76" width="6" height="2"/><rect x="1158" y="82" width="8" height="2"/>
</g>
<path d="M1114,67.500 L1118,62.500 L1130,62.500 L1132.500,66.500 M1129.500,66.500 L1132.500,66.500 L1132.500,63.500" fill="none" stroke="#b0b0b0" stroke-width="1"/>
<path d="M1145,67.500 L1149,62.500 L1161,62.500 L1163.500,66.500 M1160.500,66.500 L1163.500,66.500 L1163.500,63.500" fill="none" stroke="#b0b0b0" stroke-width="1"/>
<!-- Aa -->
<text x="1173.500" y="81" font-family="'Liberation Serif',serif" font-style="italic" font-weight="bold" font-size="21" fill="#000">A<tspan font-size="18" font-weight="normal" dx="-1">a</tspan></text>
<!-- .op -->
<text x="1205" y="77.500" font-size="16" fill="#000" textLength="20.500" lengthAdjust="spacingAndGlyphs">.op</text>
</svg>
</div>
<div id="status"></div>
<div id="task"><svg width="1920" height="38" viewBox="0 1042 1920 38" style="position:absolute;left:0;top:-1px">
<!-- active app bg -->
<rect x="601" y="1042" width="45" height="35" fill="#656667"/>
<!-- underlines -->
<g shape-rendering="crispEdges">
<rect x="54" y="1077" width="25" height="3" fill="#b4d8e6"/><rect x="79" y="1077" width="1" height="3" fill="#3b3c3e"/><rect x="80" y="1077" width="9" height="3" fill="#8fb0bc"/>
<rect x="192" y="1077" width="35" height="3" fill="#b4d8e6"/>
<rect x="284" y="1077" width="35" height="3" fill="#b4d8e6"/>
<rect x="601" y="1077" width="45" height="3" fill="#b4d8e6"/>
</g>
<!-- windows logo -->
<g fill="#fff">
<polygon points="12,1053.500 20.500,1052.200 20.500,1060.300 12,1060.300"/>
<polygon points="21.500,1052 32.200,1050.500 32.200,1060.300 21.500,1060.300"/>
<polygon points="12,1061.300 20.500,1061.300 20.500,1069.400 12,1068.200"/>
<polygon points="21.500,1061.300 32.200,1061.300 32.200,1071 21.500,1069.500"/>
</g>
<!-- explorer -->
<path d="M62,1054 Q62,1053 63,1053 L69,1053 L71,1055 L79.500,1055 Q80.500,1055 80.500,1056 L80.500,1068 L62,1068 Z" fill="#f5b400"/>
<rect x="62" y="1056.500" width="18.500" height="11.500" fill="#ffd75e"/>
<path d="M65.500,1069 L65.500,1063.500 Q65.500,1062.500 66.500,1062.500 L76,1062.500 Q77,1062.500 77,1063.500 L77,1069 L74.500,1069 L74.500,1065 L68,1065 L68,1069 Z" fill="#3a96dd"/>
<!-- chrome -->
<circle cx="117" cy="1061" r="9.400" fill="#db4437"/>
<path d="M117,1061 L108.900,1056.300 A9.400,9.400 0 0 0 117.900,1070.360 Z" fill="#0f9d58"/>
<path d="M117,1061 L125.100,1056.300 A9.400,9.400 0 0 1 117.900,1070.360 L112.300,1070 Z" fill="#ffcd40"/>
<path d="M117,1061 L126.400,1056.500 L117,1056.500 Z" fill="#db4437"/>
<circle cx="117" cy="1061" r="4.400" fill="#fff"/><circle cx="117" cy="1061" r="3.500" fill="#4285f4"/>
<!-- vscode -->
<path d="M168,1051 L173,1053 L173,1069 L168,1071 L155,1060 Z" fill="#1f9cf0"/>
<path d="M168,1051 L168,1071 L173,1069 L173,1053 Z" fill="#2aabf3"/>
<path d="M153.500,1056.500 L155.500,1055 L168,1066 L168,1071 Z" fill="#0a6fb8"/>
<path d="M153.500,1065.500 L155.500,1067 L168,1056 L168,1051 Z" fill="#1183d6"/>
<path d="M162,1061 L168,1056.500 L168,1065.500 Z" fill="#3b3c3e"/>
<!-- acrobat -->
<rect x="200" y="1052" width="18" height="17" rx="3" fill="#b30b00"/>
<path d="M204.500,1066 Q208,1063 209,1056 Q209,1054.500 208.300,1056 Q208,1060 214,1063.500 Q215.500,1064 213.500,1063 Q208,1062.500 204.500,1066 Z" fill="none" stroke="#fff" stroke-width="1.300" stroke-linejoin="round"/>
<!-- mpc 321 -->
<rect x="247.500" y="1059" width="15.500" height="9.500" fill="#f4f4f4"/>
<polygon points="246.500,1056 262,1052.500 262.800,1055.500 247.300,1059" fill="#222"/>
<path d="M249.500,1055.300 L251.500,1058 M253.500,1054.400 L255.500,1057.100 M257.500,1053.500 L259.500,1056.200" stroke="#fff" stroke-width="1.500"/>
<rect x="247.500" y="1058.500" width="15.500" height="1.500" fill="#222"/>
<text x="248.200" y="1067.800" font-size="9" font-weight="bold" textLength="14.500" lengthAdjust="spacing"><tspan fill="#e86a10">3</tspan><tspan fill="#2a6fd0">2</tspan><tspan fill="#2aa040">1</tspan></text>
<!-- zoom -->
<rect x="291.500" y="1051.500" width="19" height="19" rx="7" fill="#4a8cff"/>
<rect x="295" y="1058" width="8" height="6" rx="1.300" fill="#fff"/><polygon points="303.800,1060 307,1057.800 307,1064.200 303.800,1062" fill="#fff"/>
<!-- discord -->
<path d="M341,1053 L353,1053 Q355,1053 355,1055 L355,1070 L351.500,1067 L341,1067 Q339,1067 339,1065 L339,1055 Q339,1053 341,1053 Z" fill="#7289da"/>
<path d="M342.500,1063.500 Q342,1059 344,1057.500 Q347,1056.500 350,1057.500 Q352,1059 351.500,1063.500 Q350,1064.500 349,1064 L348.500,1063 L345.500,1063 L345,1064 Q344,1064.500 342.500,1063.500 Z" fill="#fff"/>
<ellipse cx="345.500" cy="1061" rx="0.900" ry="1.100" fill="#7289da"/><ellipse cx="348.500" cy="1061" rx="0.900" ry="1.100" fill="#7289da"/>
<!-- battlenet -->
<rect x="383" y="1051" width="20" height="19.500" rx="1" fill="#000"/>
<g fill="none" stroke="#1590e0" stroke-width="1.200">
<ellipse cx="393" cy="1061" rx="3" ry="7.500" transform="rotate(-30 393 1061)"/>
<ellipse cx="393" cy="1061" rx="3" ry="7.500" transform="rotate(30 393 1061)"/>
<ellipse cx="393" cy="1062" rx="7" ry="2.800"/>
<path d="M385,1059 L401,1059.500 M398,1054 L392,1069" stroke-width="0.700"/>
</g>
<!-- Ps -->
<rect x="430.800" y="1052.300" width="16.500" height="15.500" fill="#001d26" stroke="#00c8ff" stroke-width="1.500"/>
<text x="433.300" y="1064.500" font-size="11" font-weight="bold" fill="#00c8ff" textLength="11.500" lengthAdjust="spacingAndGlyphs">Ps</text>
<!-- Xd -->
<rect x="475.700" y="1051.700" width="18.600" height="17.600" rx="3" fill="#2e001e" stroke="#ff2bc2" stroke-width="1.400"/>
<text x="478.300" y="1065" font-size="12" font-weight="bold" fill="#ffd9f2" textLength="13.500" lengthAdjust="spacingAndGlyphs">Xd</text>
<!-- Ai -->
<rect x="522.700" y="1052.300" width="16.600" height="15.500" fill="#261300" stroke="#ff7c00" stroke-width="1.500"/>
<text x="526" y="1064.200" font-size="11" font-weight="bold" fill="#ff7c00" textLength="10" lengthAdjust="spacingAndGlyphs">Ai</text>
<!-- spotify -->
<circle cx="577" cy="1061" r="10" fill="#1ed760"/>
<g fill="none" stroke="#222" stroke-linecap="round">
<path d="M570.500,1057.500 Q577.500,1055.300 584,1058.500" stroke-width="2"/>
<path d="M571.300,1061.300 Q577.500,1059.500 583,1062" stroke-width="1.700"/>
<path d="M572,1064.800 Q577,1063.500 581.800,1065.500" stroke-width="1.400"/>
</g>
<!-- ltspice -->
<polyline points="619.500,1055.500 614,1052 614,1070 628.800,1060.800" fill="none" stroke="#000" stroke-width="1.900"/>
<path d="M620.500,1052 L623.500,1052 Q620.800,1055.500 621.800,1058.500 L624,1059 L624,1061 L615.200,1061 Q619,1057 620.500,1052 Z M623.800,1051 L632.800,1051 L630.500,1053.300 L629.300,1053.300 Q627.800,1057 627.600,1060 L625.500,1060 Q626.800,1056 626.800,1053.300 L624,1053.300 Z" fill="#a00808"/>
<!-- tray -->
<circle cx="1522.500" cy="1060.700" r="9" fill="#dcdcdc"/>
<path d="M1516,1057 Q1519,1053 1523,1053.500 Q1525,1055 1522,1057 Q1521,1059 1523.500,1060.500 Q1526,1062 1524,1064.500 Q1522,1067 1521,1064 Q1520,1061 1517.500,1060.500 Q1515.500,1059 1516,1057 Z M1527,1056 Q1530,1058 1530.500,1062 Q1529,1064 1527.500,1061 Q1526,1058 1527,1056 Z" fill="#a9a9a9"/>
<rect x="1543" y="1051" width="20" height="19.500" fill="#1c1d1d"/>
<path d="M1547,1061 Q1550,1055.500 1555,1056 L1561,1055.500 L1561,1066.500 L1554,1066.500 Q1549,1066 1547,1061 Z" fill="#76b900"/>
<path d="M1549,1061 Q1552,1057.500 1555,1058.500 Q1558,1060 1555.500,1063 Q1553,1064.500 1551.500,1061.500 Q1553,1059.800 1554.500,1061" fill="none" stroke="#1c1d1d" stroke-width="0.900"/>
<rect x="1574" y="1052" width="18" height="18" rx="6.500" fill="#4a8cff"/>
<rect x="1577.300" y="1058.200" width="7.500" height="5.600" rx="1.200" fill="#fff"/><polygon points="1585.500,1060 1588.700,1058 1588.700,1064 1585.500,1062" fill="#fff"/>
<!-- mic -->
<rect x="1608" y="1051" width="9.500" height="14" rx="3" fill="#fff"/>
<path d="M1606,1061 Q1606,1067.300 1612.700,1067.300 Q1619.400,1067.300 1619.400,1061" fill="none" stroke="#fff" stroke-width="1.100"/>
<path d="M1612.700,1067.300 L1612.700,1070 M1609,1070.200 L1616.400,1070.200" stroke="#fff" stroke-width="1.100"/>
<!-- battery -->
<rect x="1637.500" y="1056" width="14" height="10.500" fill="none" stroke="#fff" stroke-width="1.200"/>
<rect x="1639.500" y="1058" width="10" height="6.500" fill="#fff"/><rect x="1652" y="1059" width="1.500" height="4.500" fill="#fff"/>
<path d="M1634,1054.500 L1634,1056.500 M1636.500,1054.500 L1636.500,1056.500 M1633,1057 L1637.500,1057 L1637.500,1059 Q1637.500,1061 1635.300,1061 Q1633,1061 1633,1059 Z M1635.300,1061 L1635.300,1066.500 L1638,1066.500" fill="none" stroke="#fff" stroke-width="1"/>
<!-- wifi -->
<g fill="none" stroke="#fff" stroke-width="1.100">
<path d="M1666,1069 A15,15 0 0 1 1681,1054"/><path d="M1670.500,1069 A10.500,10.500 0 0 1 1681,1058.500"/><path d="M1675,1069 A6,6 0 0 1 1681,1063"/>
</g>
<circle cx="1679.600" cy="1067.600" r="1.600" fill="#fff"/>
<!-- speaker -->
<path d="M1693,1057.500 L1696,1057.500 L1700,1053.500 L1700,1068.500 L1696,1064.500 L1693,1064.500 Z" fill="none" stroke="#fff" stroke-width="1.100"/>
<g fill="none" stroke="#fff" stroke-width="1.100"><path d="M1703,1058.500 Q1705,1061 1703,1063.500"/><path d="M1706,1056 Q1709.500,1061 1706,1066"/><path d="M1709,1053 Q1714.500,1061 1709,1069" stroke="#9a9a9a"/></g>
<!-- keyboard -->
<rect x="1723.500" y="1053.700" width="29" height="16" rx="1" fill="none" stroke="#fff" stroke-width="1.100"/>
<g stroke="#fff" stroke-width="1" stroke-dasharray="1.300 1.500"><path d="M1727,1057.500 L1750,1057.500 M1728,1061.500 L1749,1061.500"/></g>
<path d="M1727,1065.500 L1730,1065.500 M1732,1065.500 L1744,1065.500 M1746,1065.500 L1749,1065.500" stroke="#fff" stroke-width="1"/>
<text x="1767.500" y="1066.700" font-size="15" fill="#fff" textLength="27" lengthAdjust="spacingAndGlyphs">TUR</text>
<text x="1812" y="1066.700" font-size="15" fill="#fff" textLength="34" lengthAdjust="spacingAndGlyphs">13:56</text>
<!-- notif -->
<path d="M1869,1051 L1889,1051 L1889,1067.500 L1879.500,1067.500 L1877.500,1070.500 L1875.500,1067.500 L1869,1067.500 Z" fill="#fff"/>
<path d="M1872.500,1055 L1885,1055 M1872.500,1058.500 L1885,1058.500 M1872.500,1062 L1882,1062" stroke="#3b3c3e" stroke-width="1.200"/>
<circle cx="1885" cy="1067" r="4.300" fill="#3b3c3e"/><path d="M1886.500,1063.500 A3.600,3.600 0 1 1 1881.500,1068 A3,3 0 0 0 1886.500,1063.500 Z" fill="#fff"/>
<rect x="1914" y="1042" width="1" height="38" fill="#8a8a8a"/>
</svg>
</div>
</body></html>
